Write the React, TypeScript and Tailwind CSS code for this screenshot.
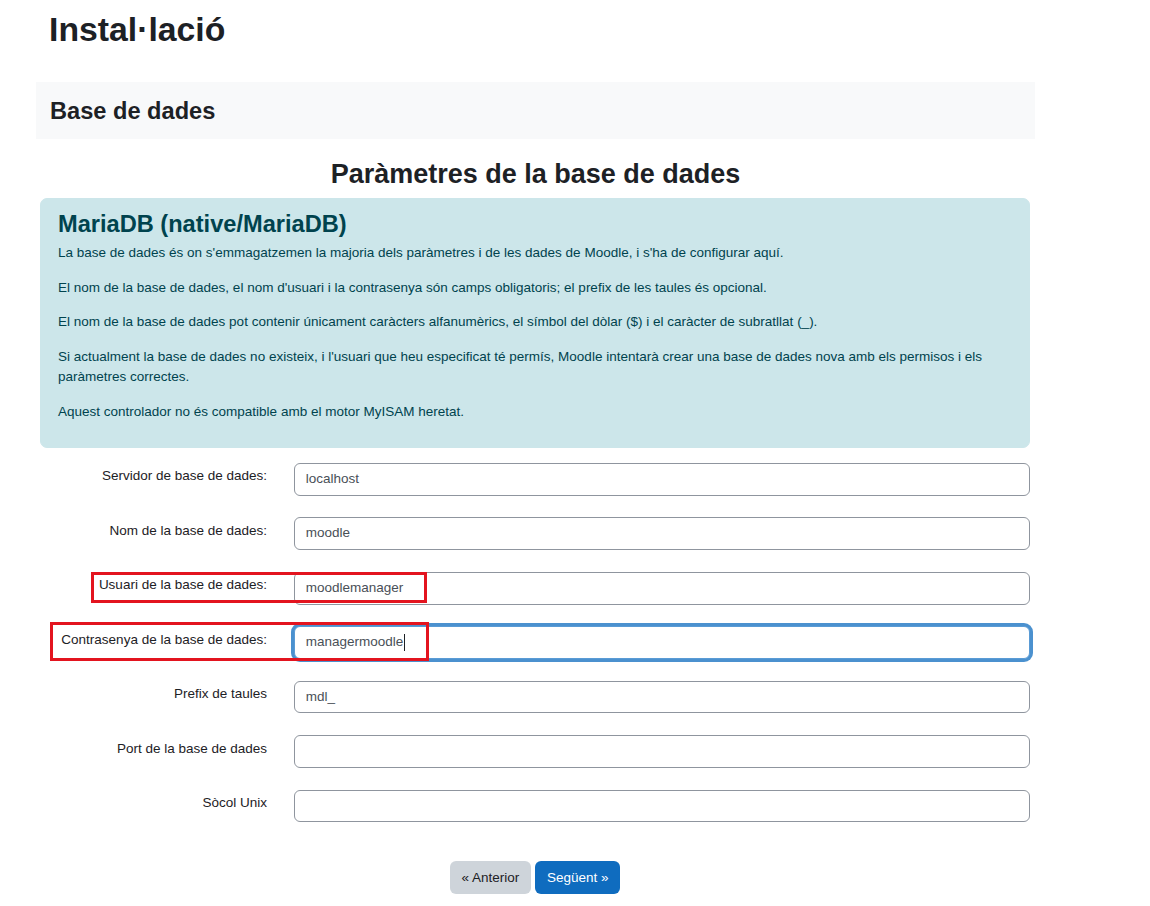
const paragraphs = [
  "La base de dades és on s'emmagatzemen la majoria dels paràmetres i de les dades de Moodle, i s'ha de configurar aquí.",
  "El nom de la base de dades, el nom d'usuari i la contrasenya són camps obligatoris; el prefix de les taules és opcional.",
  "El nom de la base de dades pot contenir únicament caràcters alfanumèrics, el símbol del dòlar ($) i el caràcter de subratllat (_).",
  "Si actualment la base de dades no existeix, i l'usuari que heu especificat té permís, Moodle intentarà crear una base de dades nova amb els permisos i els paràmetres correctes.",
  'Aquest controlador no és compatible amb el motor MyISAM heretat.',
];

type Field = { label: string; value: string; focused?: boolean; mark?: 'user' | 'pass' };

const fields: Field[] = [
  { label: 'Servidor de base de dades:', value: 'localhost' },
  { label: 'Nom de la base de dades:', value: 'moodle' },
  { label: 'Usuari de la base de dades:', value: 'moodlemanager', mark: 'user' },
  { label: 'Contrasenya de la base de dades:', value: 'managermoodle', focused: true, mark: 'pass' },
  { label: 'Prefix de taules', value: 'mdl_' },
  { label: 'Port de la base de dades', value: '' },
  { label: 'Sòcol Unix', value: '' },
];

function FormRow({ field }: { field: Field }) {
  return (
    <div className="relative flex items-start h-[32.85px]">
      <div className="w-[227px] shrink-0 pt-[3.4px] text-right text-[13.5px] leading-[20.25px] text-[#1d2125]">
        {field.label}
      </div>
      <div
        className={`ml-[27px] flex-1 h-[32.85px] rounded-[6px] bg-white px-[10.8px] flex items-center text-[13.5px] leading-[20.25px] text-[#495057] border ${
          field.focused
            ? 'border-[#5a9bd5] shadow-[0_0_0_3px_rgba(15,108,191,0.75)]'
            : 'border-[#8f959e]'
        }`}
      >
        <span>{field.value}</span>
        {field.focused && <span className="ml-[1px] inline-block w-px h-[17px] bg-[#1d2125]" />}
      </div>
      {/* red annotation boxes drawn over the screenshot */}
      {field.mark === 'user' && (
        <div className="absolute left-[50.7px] top-0 w-[336px] h-[31px] border-[3px] border-[#e3141f] pointer-events-none" />
      )}
      {field.mark === 'pass' && (
        <div className="absolute left-[10px] top-[-4.5px] w-[379px] h-[39px] border-[3px] border-[#e3141f] pointer-events-none" />
      )}
    </div>
  );
}

export default function App() {
  return (
    <div className="w-[1150px] min-h-[906px] bg-white text-[#1d2125] font-['Liberation_Sans',Arial,sans-serif]">
      <h1 className="ml-[49px] pt-[9px] text-[33.75px] leading-[1.2] font-bold">Instal·lació</h1>

      <div className="ml-[36px] w-[999px]">
        <div className="mt-[32.5px] bg-[#f8f9fa] px-[14px] pt-[15.4px] pb-[13.4px]">
          <h2 className="text-[23.625px] leading-[1.2] font-bold">Base de dades</h2>
        </div>

        <h2 className="mt-[18.6px] text-center text-[27px] leading-[1.2] font-bold">
          Paràmetres de la base de dades
        </h2>

        <div className="mt-[7.8px] ml-[4px] w-[990px]">
          <div className="rounded-[7px] border border-[#cce6ea] bg-[#cce6ea] text-[#00434e] px-[17px] pt-[10.8px] pb-[10.8px]">
            <h3 className="mb-[5px] text-[23.625px] leading-[1.2] font-bold">MariaDB (native/MariaDB)</h3>
            {paragraphs.map((p, i) => (
              <p key={i} className="mb-[14.4px] text-[13.5px] leading-[20.25px]">
                {p}
              </p>
            ))}
          </div>

          <div className="mt-[14.4px] flex flex-col gap-[21.65px]">
            {fields.map((f) => (
              <FormRow key={f.label} field={f} />
            ))}
          </div>

          <div className="mt-[39px] flex justify-center gap-[4px]">
            <button className="h-[32.6px] rounded-[6px] bg-[#ced4da] px-[11.8px] text-[13.5px] leading-[20.25px] text-[#1d2125]">
              « Anterior
            </button>
            <button className="h-[32.6px] rounded-[6px] bg-[#0f6cbf] px-[11.8px] text-[13.5px] leading-[20.25px] text-white">
              Següent »
            </button>
          </div>
        </div>
      </div>
    </div>
  );
}
